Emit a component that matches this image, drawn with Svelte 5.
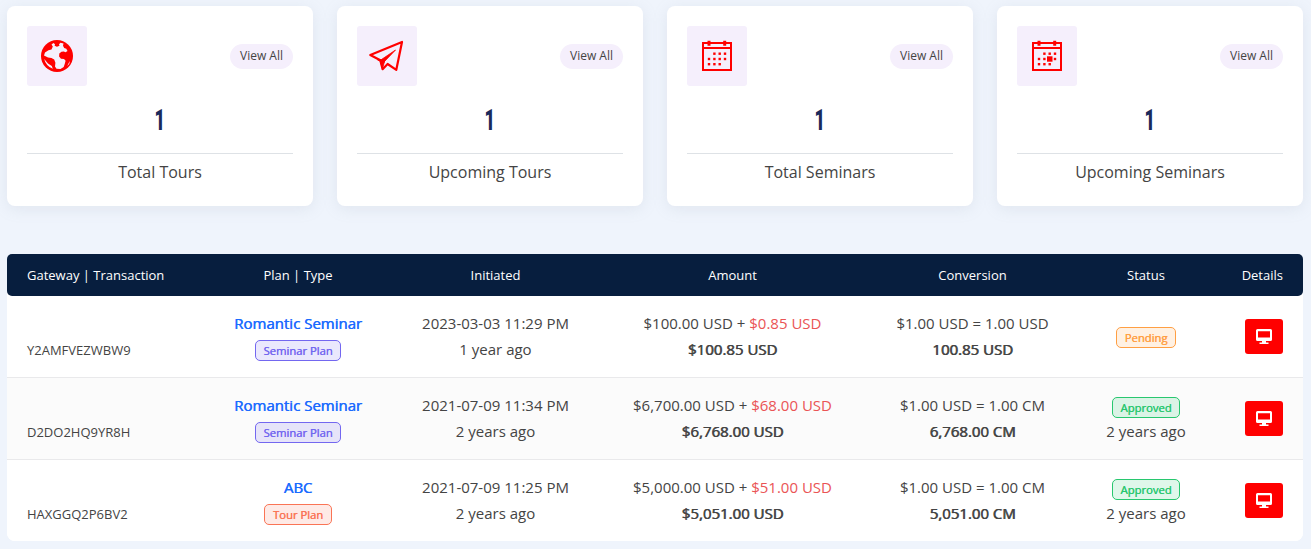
<script>
  const cards = [
    { icon: 'globe', label: 'Total Tours' },
    { icon: 'plane', label: 'Upcoming Tours' },
    { icon: 'calendar', label: 'Total Seminars' },
    { icon: 'event', label: 'Upcoming Seminars' }
  ];
  const heads = ['Gateway | Transaction', 'Plan | Type', 'Initiated', 'Amount', 'Conversion', 'Status', 'Details'];
  const rows = [
    { id: 'Y2AMFVEZWBW9', plan: 'Romantic Seminar', type: 'Seminar Plan', tone: 'violet', date: '2023-03-03 11:29 PM', ago: '1 year ago', amount: '$100.00 USD', fee: '$0.85 USD', total: '$100.85 USD', rate: '$1.00 USD = 1.00 USD', converted: '100.85 USD', status: 'Pending' },
    { id: 'D2DO2HQ9YR8H', plan: 'Romantic Seminar', type: 'Seminar Plan', tone: 'violet', date: '2021-07-09 11:34 PM', ago: '2 years ago', amount: '$6,700.00 USD', fee: '$68.00 USD', total: '$6,768.00 USD', rate: '$1.00 USD = 1.00 CM', converted: '6,768.00 CM', status: 'Approved' },
    { id: 'HAXGGQ2P6BV2', plan: 'ABC', type: 'Tour Plan', tone: 'coral', date: '2021-07-09 11:25 PM', ago: '2 years ago', amount: '$5,000.00 USD', fee: '$51.00 USD', total: '$5,051.00 USD', rate: '$1.00 USD = 1.00 CM', converted: '5,051.00 CM', status: 'Approved' }
  ];
  const dots = [[15.4, 15.7], [20.7, 15.7], [26, 15.7], [10, 21], [15.4, 21], [20.7, 21], [26, 21], [10, 26.2], [15.4, 26.2], [20.7, 26.2]];
</script>

<main>
  <section class="cards">
    {#each cards as card}
      <article class="card">
        <div class="top">
          <div class="icon">
            {#if card.icon === 'globe'}
              <svg width="32" height="32" viewBox="0 0 32 32">
                <circle cx="16" cy="16" r="16" fill="red" />
                <path fill="#f5effc" d="M3 15.500 4 12.600 7.500 10.200 10.500 9.500 11.800 6.500 10.500 4.500 12.500 3 14 4.200 13.600 5.800 16 6.800 18.500 5.800 18 4.200 19.500 2.700 22.500 3.500 22 5.800 23.200 8 25.300 8.800 26.500 11 24.500 12.300 22.800 11.400 20.500 11.800 18.300 13.600 18.100 16.500 20 18.700 23 19 24.600 20.800 23.800 23.800 22.700 27 19.500 29 15.500 28.800 14 26.500 14.400 22.800 13.200 19.500 10.500 18 7 17.500Z" />
                <path fill="#f5effc" d="m3.200 19 3.800 4.400 3.800 2.700 1 2.700A14 14 0 0 1 3.200 19ZM28 22.500l1-1.600-.8 3-2 2.200Z" />
                <path fill="red" d="m14.500 2.500 2.800.5.500 2.500-2.300.7-1.300-1.700Z" />
              </svg>
            {:else if card.icon === 'plane'}
              <svg width="36" height="34" viewBox="0 0 36 34" fill="none" stroke="red" stroke-width="2.200" stroke-linejoin="round" stroke-linecap="round">
                <path d="M1.300 16 33 3 27.300 30.800 18.600 25 13.600 30.200 11.300 21.300Z" />
                <path d="M11.300 21.300 26.500 11 15.500 22.500 13.600 29.500Z" fill="red" stroke-width=".8" />
                <path d="m9.500 20.800 5.500 1.700" />
              </svg>
            {:else}
              <svg width="36" height="36" viewBox="0 0 36 36" fill="red">
                <path d="M3 4H33V33H3ZM5 6v3H31V6ZM5 11V31H31V11Z" fill-rule="evenodd" />
                <path d="M8.500 2.700h3v5h-3zM24.200 2.700h3v5h-3z" />
                {#each dots as [x, y]}
                  <rect x={x - 1.2} y={y - 1.2} width="2.4" height="2.4" />
                {/each}
                {#if card.icon === 'event'}<path d="M18 18.300h5.500v5.400H18z" />{/if}
              </svg>
            {/if}
          </div>
          <span class="view">View All</span>
        </div>
        <div class="count"><span>1</span></div>
        <div class="label">{card.label}</div>
      </article>
    {/each}
  </section>

  <section class="table">
    <div class="row head">
      {#each heads as head}<div>{head}</div>{/each}
    </div>
    {#each rows as row}
      <div class="row body">
        <div class="id">{row.id}</div>
        <div><span class="plan">{row.plan}</span><br /><span class="badge {row.tone}">{row.type}</span></div>
        <div>{row.date}<br />{row.ago}</div>
        <div>{row.amount} + <span class="fee">{row.fee}</span><br /><b>{row.total}</b></div>
        <div>{row.rate}<br /><b>{row.converted}</b></div>
        <div class="status">
          <span class="badge {row.status === 'Pending' ? 'orange' : 'green'}">{row.status}</span>
          {#if row.status !== 'Pending'}<br />{row.ago}{/if}
        </div>
        <div class="details">
          <button aria-label="Details">
            <svg width="16" height="15" viewBox="0 0 16 15">
              <path fill="#fff" fill-rule="evenodd" d="M1.500 0h13A1.500 1.500 0 0 1 16 1.500v9a1.500 1.500 0 0 1-1.500 1.500H10v1.500h2.500V15h-9v-1.500H6V12H1.500A1.500 1.500 0 0 1 0 10.500v-9A1.500 1.500 0 0 1 1.500 0ZM2 2.200V8.500H14V2.200Z" />
            </svg>
          </button>
        </div>
      </div>
    {/each}
  </section>
</main>

<style>
  :global(body) { background: #eff4fc; overflow: hidden; }
  main { box-sizing: border-box; height: 549px; padding: 6px 8px 0 7px; font-family: "Open Sans", sans-serif; color: #444; }
  .cards { display: grid; grid-template-columns: repeat(4, 306px); gap: 24px; }
  .card { box-sizing: border-box; height: 200px; padding: 20px; border-radius: 8px; background: #fff; box-shadow: 0 3px 15px rgba(138, 152, 171, .15); }
  .top { display: flex; justify-content: space-between; align-items: center; }
  .icon { width: 60px; height: 60px; display: grid; place-items: center; background: #f5effc; border-radius: 3px; }
  .view { box-sizing: border-box; width: 63px; height: 25px; line-height: 24px; text-align: center; border-radius: 13px; background: #f5effc; font-size: 12px; }
  .count { height: 67px; border-bottom: 1px solid #dee2e6; text-align: center; font: 900 30px/67px Roboto, sans-serif; color: #1a2a5b; }
  .count span { display: inline-block; transform: scaleX(.6); }
  .label { line-height: 26px; margin-top: 5px; text-align: center; font-size: 16px; }
  .table { margin-top: 48px; width: 1296px; background: #fff; border-radius: 8px; }
  .row { display: grid; grid-template-columns: 202px 178px 217px 257px 223px 124px 95px; align-items: center; text-align: center; }
  .head { height: 42px; border-radius: 5px; background: #071e3e; color: #fff; font-size: 13px; }
  .head > :first-child { text-align: left; padding-left: 20px; }
  .head > :last-child { text-align: right; padding-right: 20px; }
  .body { box-sizing: border-box; height: 82px; border-bottom: 1px solid #e9e9eb; font-size: 15px; line-height: 26px; }
  .body > div:not(.id, .details, .status) { padding-bottom: 2px; }
  .body:nth-child(odd) { background: #fbfbfb; }
  .body:last-child { height: 81px; border-bottom: 0; border-radius: 0 0 8px 8px; background: #fff; }
  .id { text-align: left; padding: 26px 0 0 20px; font-size: 13px; }
  .status { padding-bottom: 2px; }
  .plan { color: #1b6bff; text-shadow: .5px 0 0; }
  b { font-weight: 400; text-shadow: .7px 0 0; }
  .fee { color: #ea5455; }
  .badge { display: inline-block; box-sizing: border-box; height: 21px; line-height: 20px; padding: 0 7.500px; border: 1px solid; border-radius: 5px; font-size: 11.250px; text-shadow: .4px 0 0; vertical-align: middle; }
  .green { position: relative; top: 1px; }
  .violet { color: #7367f0; background: rgba(115, 103, 240, .15); }
  .coral { color: #fa7455; background: rgba(250, 116, 85, .15); }
  .orange { color: #ff9f43; background: rgba(255, 159, 67, .15); }
  .green { color: #28c76f; background: rgba(40, 199, 111, .15); }
  .details { display: flex; justify-content: flex-end; padding-right: 20px; }
  button { width: 38px; height: 35px; padding: 0; border: 0; border-radius: 3px; background: red; display: grid; place-items: center; }
</style>
